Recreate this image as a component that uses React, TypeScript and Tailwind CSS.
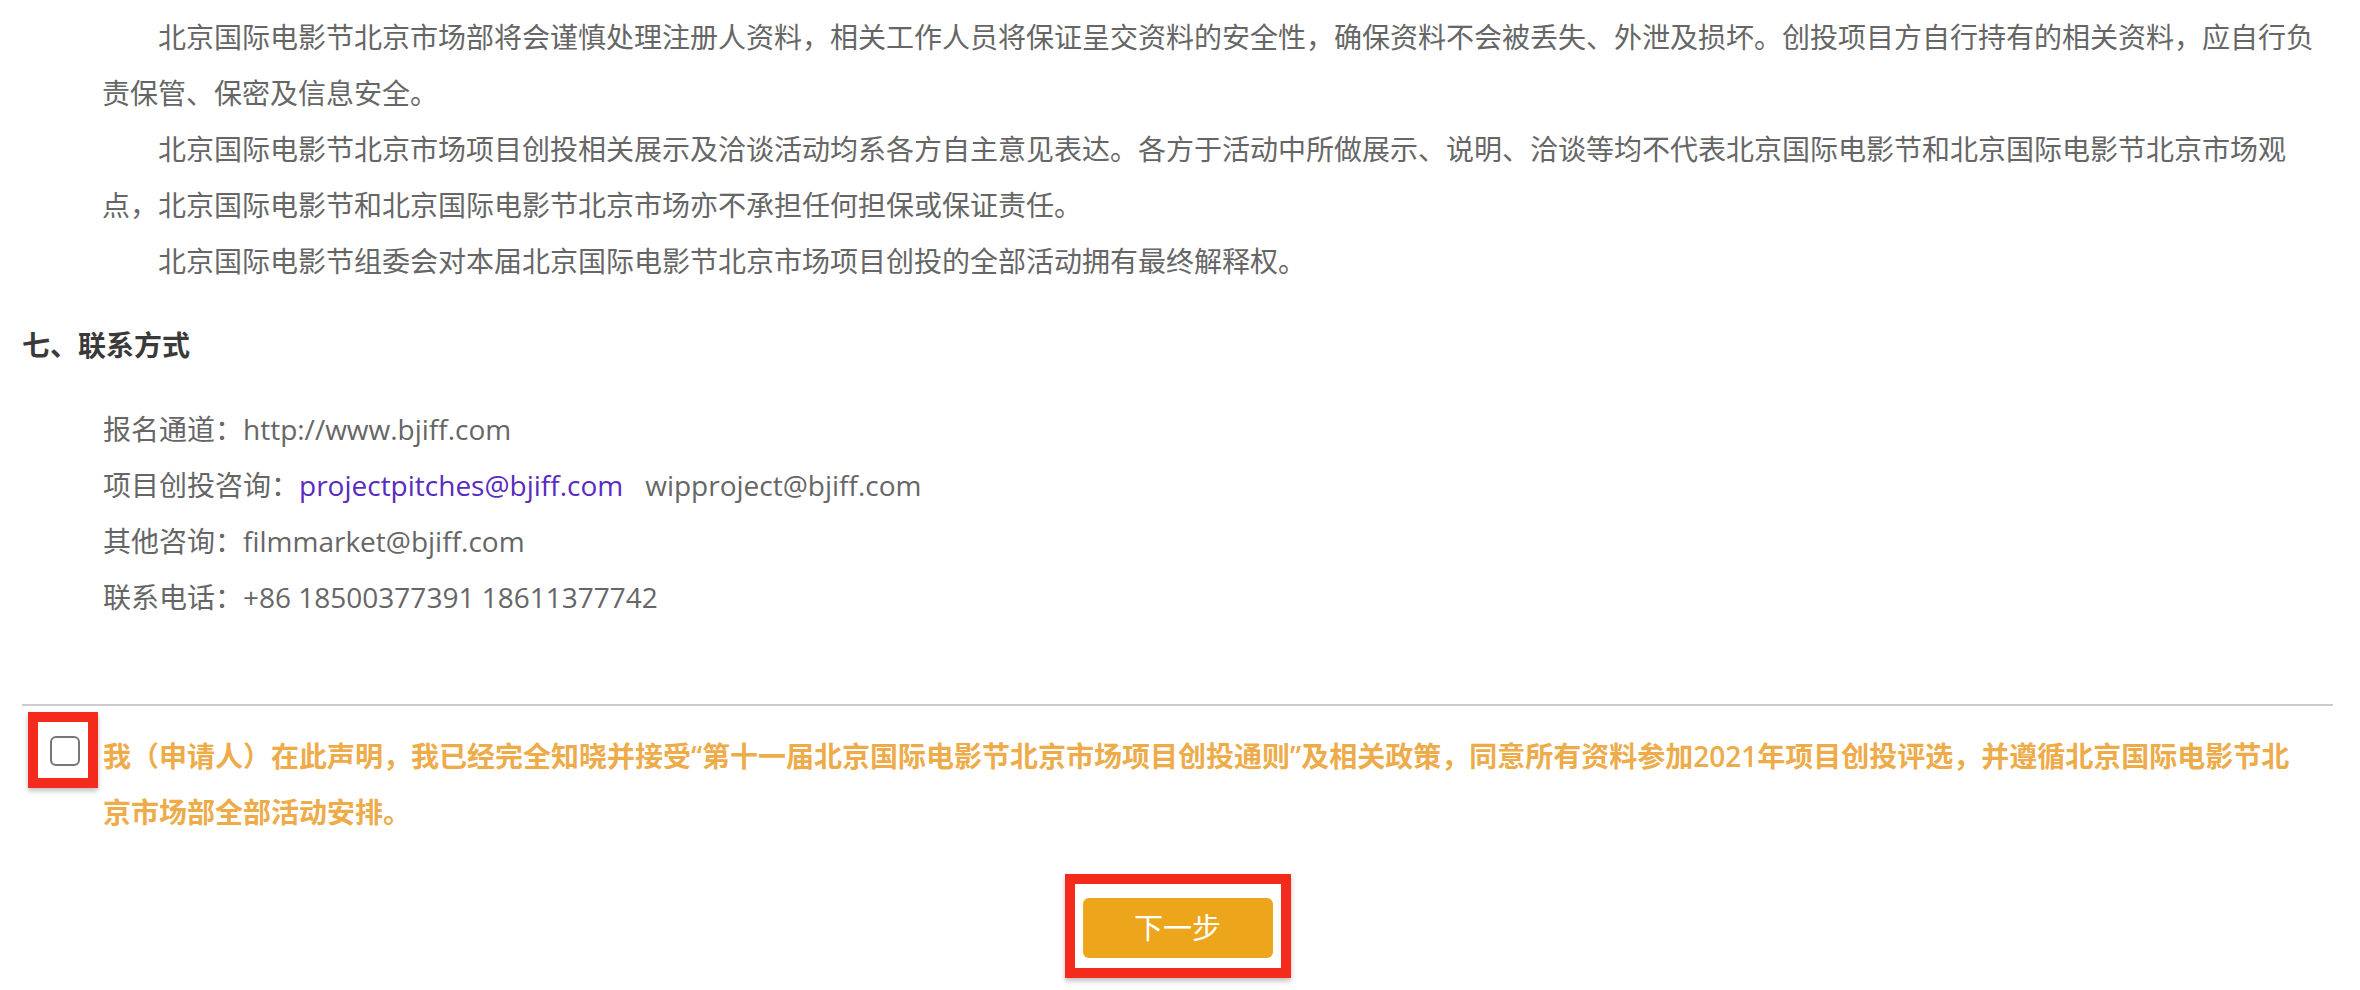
import { useState } from "react";

const paragraphs = [
    "北京国际电影节北京市场部将会谨慎处理注册人资料，相关工作人员将保证呈交资料的安全性，确保资料不会被丢失、外泄及损坏。创投项目方自行持有的相关资料，应自行负责保管、保密及信息安全。",
    "北京国际电影节北京市场项目创投相关展示及洽谈活动均系各方自主意见表达。各方于活动中所做展示、说明、洽谈等均不代表北京国际电影节和北京国际电影节北京市场观点，北京国际电影节和北京国际电影节北京市场亦不承担任何担保或保证责任。",
    "北京国际电影节组委会对本届北京国际电影节北京市场项目创投的全部活动拥有最终解释权。",
];

export default function App() {
    const [agreed, setAgreed] = useState(false);

    return (
        <div className="min-h-screen bg-white pl-[22px] pr-[27px] pt-[9px] font-['Open_Sans','Noto_Sans_CJK_SC',sans-serif] text-[28px] leading-[56px] text-[#666]">
            {/* Rules text */}
            <div className="pl-[80px]">
                {paragraphs.map((p, i) => (
                    <p key={i} className="indent-[56px]">{p}</p>
                ))}
            </div>

            {/* Contact */}
            <h3 className="my-[28px] font-bold text-[#3a3a3a]">七、联系方式</h3>
            <div className="pl-[81px]">
                <p>报名通道：http://www.bjiff.com</p>
                <p>
                    项目创投咨询：<a href="#" className="text-[#5a2bbf]">projectpitches@bjiff.com</a>
                    <span className="ml-[22px]">wipproject@bjiff.com</span>
                </p>
                <p>其他咨询：filmmarket@bjiff.com</p>
                <p>联系电话：+86 18500377391 18611377742</p>
            </div>

            {/* Agreement */}
            <div className="mt-[79px] border-t-2 border-[#cccccc]">
                <div className="mt-[6px] flex items-start">
                    <div className="ml-[6px] flex h-[76px] w-[70px] shrink-0 border-[10px] border-[#f42a1c] pl-[12px] pt-[14px] shadow-[0_3px_5px_rgba(0,0,0,0.25)]">
                        <button
                            onClick={() => setAgreed(!agreed)}
                            className={`h-[30px] w-[30px] rounded-[6px] border-2 border-[#777] ${agreed ? "bg-[#eda61c]" : "bg-white"}`}
                        ></button>
                    </div>
                    <p className="ml-[5px] mt-[16px] flex-1 pr-[20px] font-semibold text-[#eeab4a]">
                        我（申请人）在此声明，我已经完全知晓并接受“第十一届北京国际电影节北京市场项目创投通则”及相关政策，同意所有资料参加2021年项目创投评选，并遵循北京国际电影节北京市场部全部活动安排。
                    </p>
                </div>

                <div className="mt-[34px] flex justify-center">
                    <div className="border-[10px] border-[#f42a1c] px-[8px] pb-[10px] pt-[14px] shadow-[0_3px_5px_rgba(0,0,0,0.25)]">
                        <button className="h-[60px] w-[190px] rounded-[6px] bg-[#eda61c] text-[29px] leading-[60px] text-white">
                            下一步
                        </button>
                    </div>
                </div>
            </div>
        </div>
    );
}
